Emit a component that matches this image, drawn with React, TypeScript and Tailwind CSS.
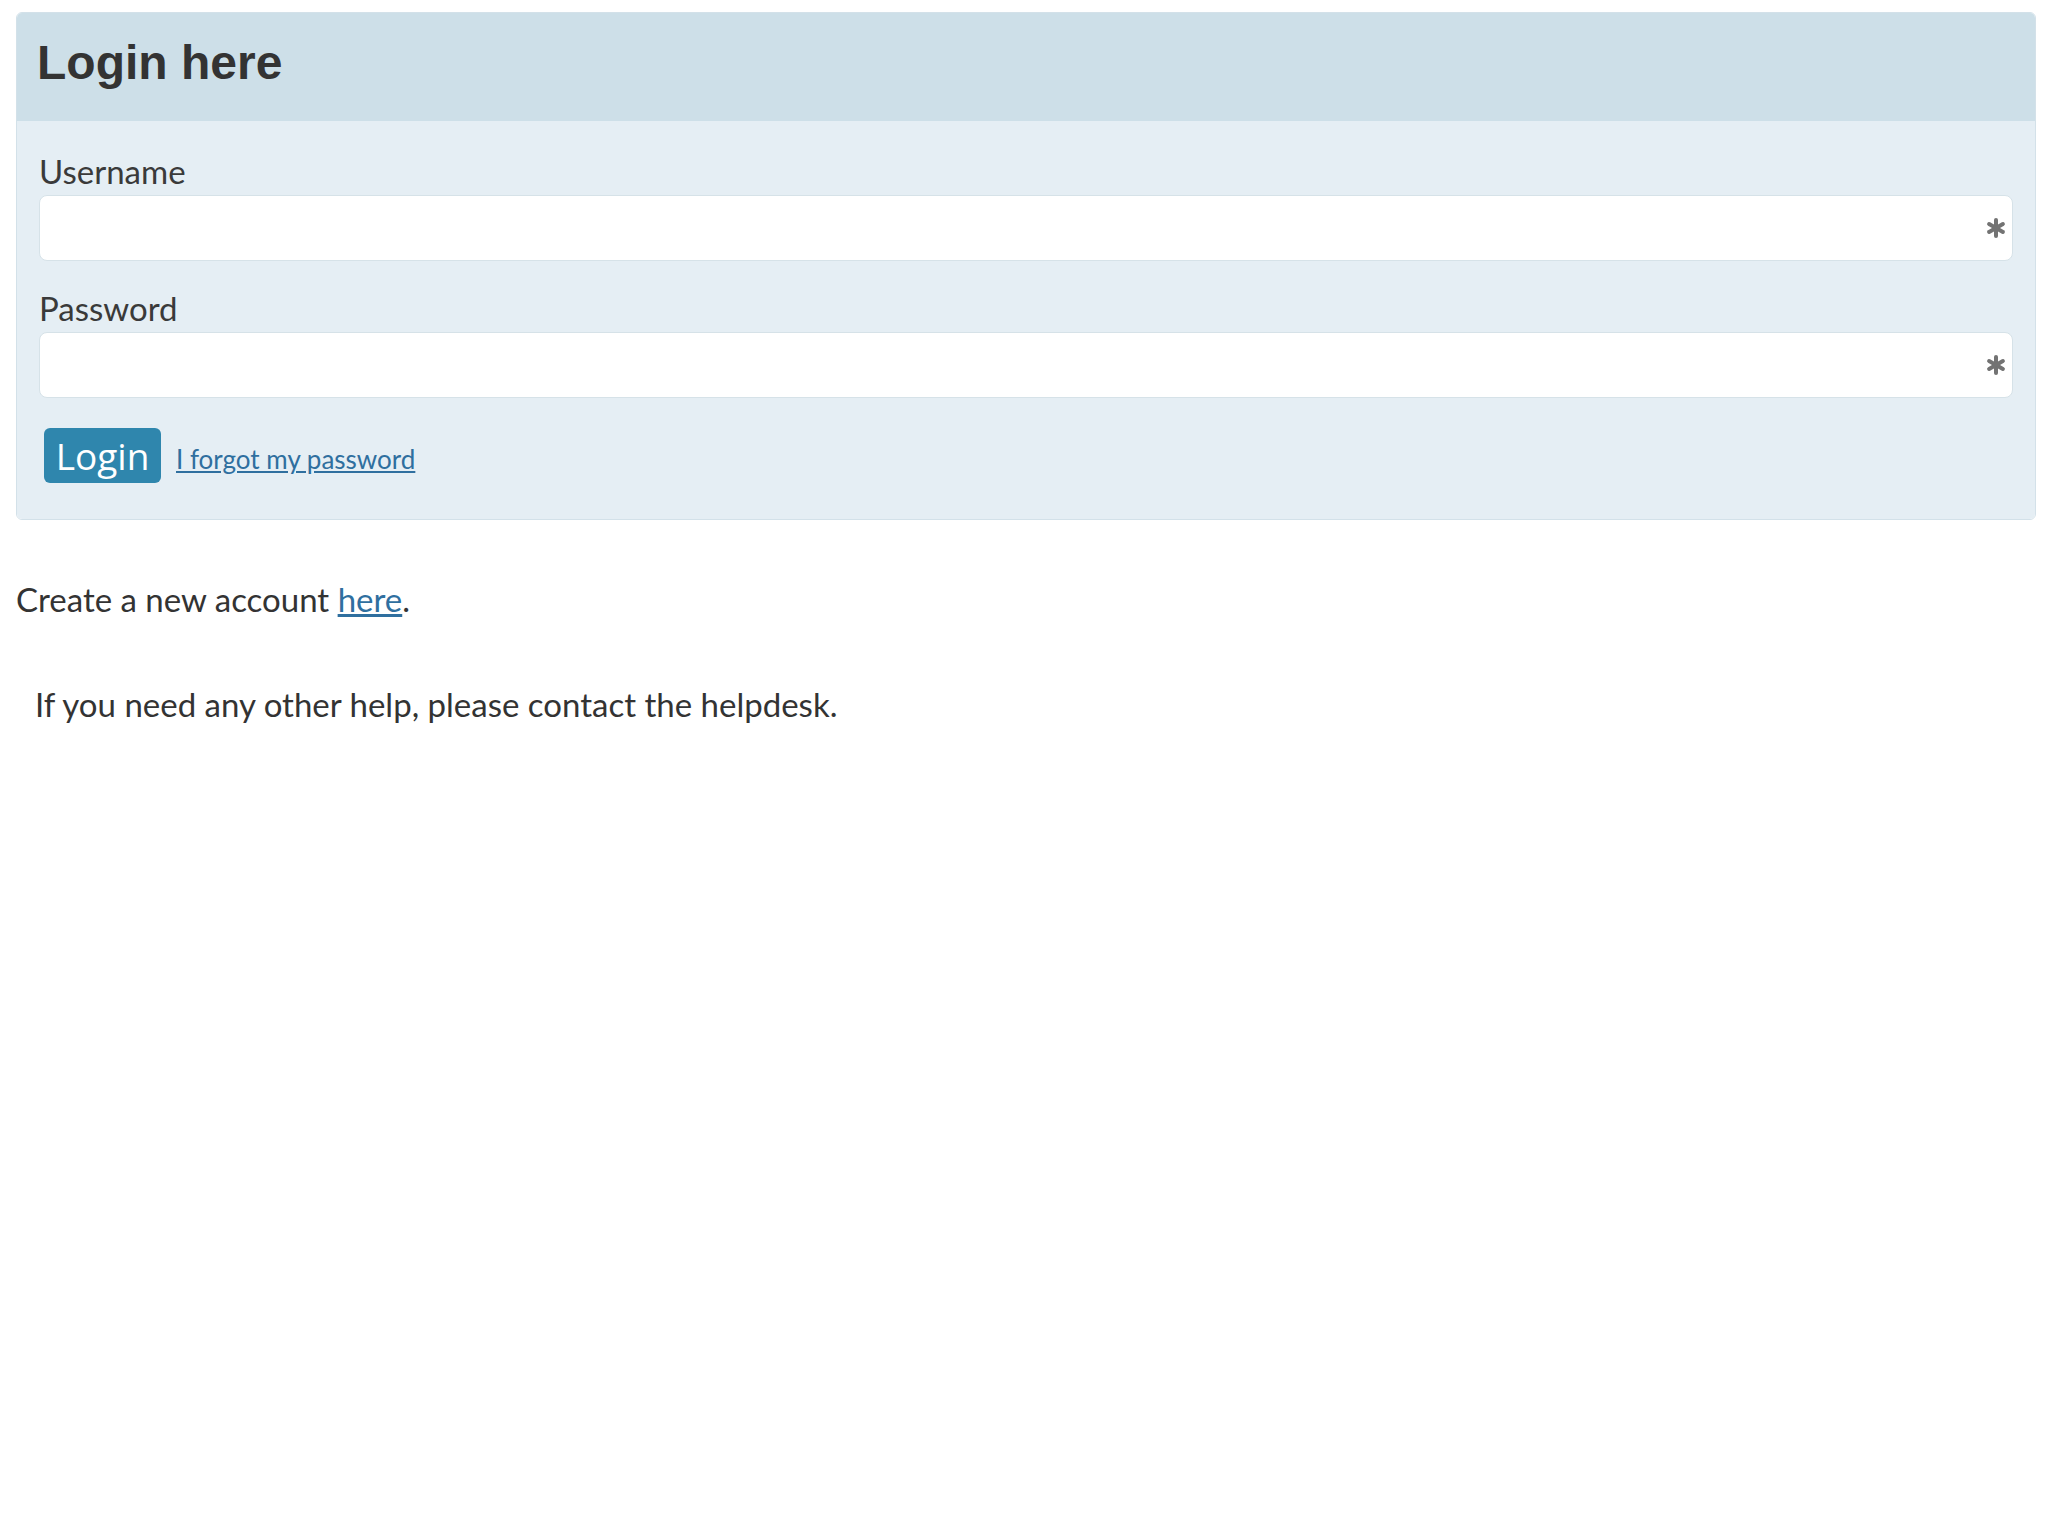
function RequiredMark() {
  return (
    <svg
      className="absolute right-[5px] top-1/2 h-[22px] w-[22px] -translate-y-1/2"
      viewBox="0 0 22 22"
      fill="none"
      stroke="#737373"
      strokeWidth="4"
      strokeLinecap="round"
    >
      <line x1="11" y1="3" x2="11" y2="19" />
      <line x1="4.1" y1="7" x2="17.9" y2="15" />
      <line x1="4.1" y1="15" x2="17.9" y2="7" />
    </svg>
  );
}

export default function App() {
  return (
    <div className="min-h-[1536px] w-[2048px] bg-white pl-4 pr-3 pt-3 text-[#333]">
      {/* login panel */}
      <div className="overflow-hidden rounded-md border border-[#d3e1e9]">
        <div className="flex h-[108px] items-center bg-[#cddfe8] px-[20px] pb-[8px]">
          <h1 className="font-['Liberation_Sans',Arial,sans-serif] text-[48px] font-bold leading-none text-[#333]">
            Login here
          </h1>
        </div>
        <div className="bg-[#e5eef4] px-[22px] pb-[36px] pt-[28px] font-['Lato',sans-serif]">
          <label className="block text-[33px] leading-[44px] text-[#3a3a3a]">Username</label>
          <div className="relative mt-[2px] h-[66px] rounded-lg border border-[#d6e2e8] bg-white">
            <RequiredMark />
          </div>
          <label className="mt-[25px] block text-[33px] leading-[44px] text-[#3a3a3a]">Password</label>
          <div className="relative mt-[2px] h-[66px] rounded-lg border border-[#d6e2e8] bg-white">
            <RequiredMark />
          </div>
          <div className="mt-[30px] flex items-end gap-[15px] pl-[5px]">
            <button className="flex h-[55px] w-[117px] items-center justify-center rounded-md bg-[#2f86ad] font-['Open_Sans',sans-serif] text-[37px] leading-none text-white">
              Login
            </button>
            <a href="#" className="pb-[11px] text-[26px] leading-none text-[#2f6f9f] underline">
              I forgot my password
            </a>
          </div>
        </div>
      </div>

      {/* below */}
      <p className="mt-[63px] font-['Lato',sans-serif] text-[33px] leading-none text-[#333]">
        Create a new account{" "}
        <a href="#" className="text-[#2f6f9f] underline">
          here
        </a>
        .
      </p>
      <p className="mt-[72px] pl-[19px] font-['Lato',sans-serif] text-[33px] leading-none text-[#333]">
        If you need any other help, please contact the helpdesk.
      </p>
    </div>
  );
}
